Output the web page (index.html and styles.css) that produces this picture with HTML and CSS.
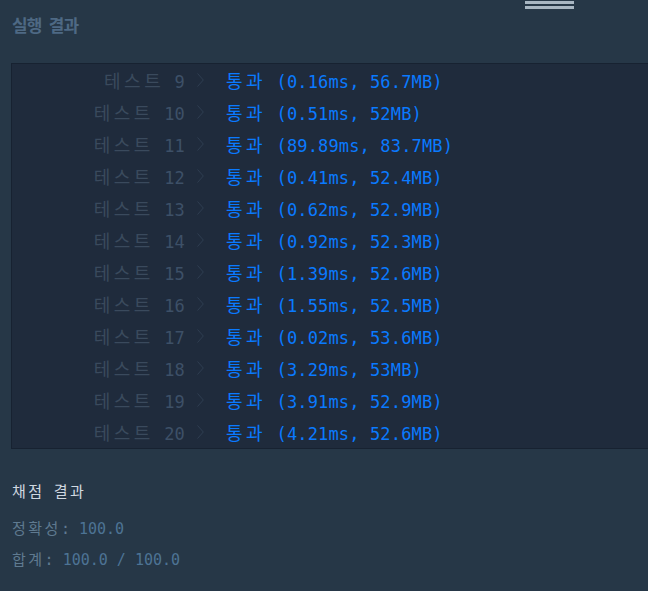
FILE: index.html
```html
<!DOCTYPE html>
<html lang="ko">
<head>
<meta charset="utf-8">
<title>실행 결과</title>
<link rel="stylesheet" href="styles.css">
</head>
<body>
<div class="page">
  <div class="header">
    <h2 class="title">실행 결과</h2>
    <div class="handle"><span></span><span></span></div>
  </div>
  <div class="console">
    <div class="row"><div class="name"><span class="ko">테스트</span> <span class="num">9</span></div><svg class="chev" width="7" height="14" viewBox="0 0 7 14"><path d="M0.5 0.5 L6.3 7 L0.5 13.5" fill="none" stroke="#2f3e51" stroke-width="1"/></svg><div class="res"><span class="ko">통과</span> (0.16ms, 56.7MB)</div></div>
    <div class="row"><div class="name"><span class="ko">테스트</span> <span class="num">10</span></div><svg class="chev" width="7" height="14" viewBox="0 0 7 14"><path d="M0.5 0.5 L6.3 7 L0.5 13.5" fill="none" stroke="#2f3e51" stroke-width="1"/></svg><div class="res"><span class="ko">통과</span> (0.51ms, 52MB)</div></div>
    <div class="row"><div class="name"><span class="ko">테스트</span> <span class="num">11</span></div><svg class="chev" width="7" height="14" viewBox="0 0 7 14"><path d="M0.5 0.5 L6.3 7 L0.5 13.5" fill="none" stroke="#2f3e51" stroke-width="1"/></svg><div class="res"><span class="ko">통과</span> (89.89ms, 83.7MB)</div></div>
    <div class="row"><div class="name"><span class="ko">테스트</span> <span class="num">12</span></div><svg class="chev" width="7" height="14" viewBox="0 0 7 14"><path d="M0.5 0.5 L6.3 7 L0.5 13.5" fill="none" stroke="#2f3e51" stroke-width="1"/></svg><div class="res"><span class="ko">통과</span> (0.41ms, 52.4MB)</div></div>
    <div class="row"><div class="name"><span class="ko">테스트</span> <span class="num">13</span></div><svg class="chev" width="7" height="14" viewBox="0 0 7 14"><path d="M0.5 0.5 L6.3 7 L0.5 13.5" fill="none" stroke="#2f3e51" stroke-width="1"/></svg><div class="res"><span class="ko">통과</span> (0.62ms, 52.9MB)</div></div>
    <div class="row"><div class="name"><span class="ko">테스트</span> <span class="num">14</span></div><svg class="chev" width="7" height="14" viewBox="0 0 7 14"><path d="M0.5 0.5 L6.3 7 L0.5 13.5" fill="none" stroke="#2f3e51" stroke-width="1"/></svg><div class="res"><span class="ko">통과</span> (0.92ms, 52.3MB)</div></div>
    <div class="row"><div class="name"><span class="ko">테스트</span> <span class="num">15</span></div><svg class="chev" width="7" height="14" viewBox="0 0 7 14"><path d="M0.5 0.5 L6.3 7 L0.5 13.5" fill="none" stroke="#2f3e51" stroke-width="1"/></svg><div class="res"><span class="ko">통과</span> (1.39ms, 52.6MB)</div></div>
    <div class="row"><div class="name"><span class="ko">테스트</span> <span class="num">16</span></div><svg class="chev" width="7" height="14" viewBox="0 0 7 14"><path d="M0.5 0.5 L6.3 7 L0.5 13.5" fill="none" stroke="#2f3e51" stroke-width="1"/></svg><div class="res"><span class="ko">통과</span> (1.55ms, 52.5MB)</div></div>
    <div class="row"><div class="name"><span class="ko">테스트</span> <span class="num">17</span></div><svg class="chev" width="7" height="14" viewBox="0 0 7 14"><path d="M0.5 0.5 L6.3 7 L0.5 13.5" fill="none" stroke="#2f3e51" stroke-width="1"/></svg><div class="res"><span class="ko">통과</span> (0.02ms, 53.6MB)</div></div>
    <div class="row"><div class="name"><span class="ko">테스트</span> <span class="num">18</span></div><svg class="chev" width="7" height="14" viewBox="0 0 7 14"><path d="M0.5 0.5 L6.3 7 L0.5 13.5" fill="none" stroke="#2f3e51" stroke-width="1"/></svg><div class="res"><span class="ko">통과</span> (3.29ms, 53MB)</div></div>
    <div class="row"><div class="name"><span class="ko">테스트</span> <span class="num">19</span></div><svg class="chev" width="7" height="14" viewBox="0 0 7 14"><path d="M0.5 0.5 L6.3 7 L0.5 13.5" fill="none" stroke="#2f3e51" stroke-width="1"/></svg><div class="res"><span class="ko">통과</span> (3.91ms, 52.9MB)</div></div>
    <div class="row"><div class="name"><span class="ko">테스트</span> <span class="num">20</span></div><svg class="chev" width="7" height="14" viewBox="0 0 7 14"><path d="M0.5 0.5 L6.3 7 L0.5 13.5" fill="none" stroke="#2f3e51" stroke-width="1"/></svg><div class="res"><span class="ko">통과</span> (4.21ms, 52.6MB)</div></div>
  </div>
  <div class="summary">
    <div class="sum-title"><span class="ko2">채점</span> <span class="ko2">결과</span></div>
    <div class="stat"><span class="ko2">정확성</span>: <span class="val">100.0</span></div>
    <div class="stat"><span class="ko2">합계</span>: <span class="val">100.0 / 100.0</span></div>
  </div>
</div>
</body>
</html>
```

FILE: styles.css
```css
html, body {
  margin: 0;
  padding: 0;
  background: #263747;
}
.page {
  width: 648px;
  height: 591px;
  overflow: hidden;
  position: relative;
  font-family: "DejaVu Sans Mono", "Noto Sans CJK KR", monospace;
}
.header {
  height: 63px;
  box-sizing: border-box;
  padding: 12px 0 0 12px;
}
.title {
  margin: 0;
  font-family: "Noto Sans CJK KR", "Noto Sans", sans-serif;
  font-size: 17px;
  letter-spacing: -0.8px;
  word-spacing: 3px;
  font-weight: 700;
  line-height: 25px;
  color: #4e6984;
}
.handle {
  position: absolute;
  left: 525px;
  top: 1px;
  width: 49px;
  display: flex;
  flex-direction: column;
  gap: 2px;
}
.handle span {
  display: block;
  height: 3px;
  background: #a8b6c2;
}
.console {
  margin-left: 11px;
  background: #1f2b3c;
  border-top: 1px solid #172231;
  border-left: 1px solid #172231;
  border-bottom: 1px solid #172231;
}
.row {
  display: flex;
  align-items: center;
  height: 32px;
  font-size: 17px;
  letter-spacing: 0.15px;
  white-space: pre;
}
.name {
  width: 173px;
  text-align: right;
  color: #3a4a5d;
}
.num {
  color: #3d5067;
}
.ko {
  font-family: "Noto Sans CJK KR", sans-serif;
  font-size: 18px;
  letter-spacing: 3.5px;
}
.chev {
  margin-left: 12px;
  flex: none;
}
.res {
  margin-left: 22px;
  color: #0a7aff;
}
.summary {
  padding: 30px 0 0 12px;
}
.sum-title {
  font-size: 15px;
  line-height: 24px;
  color: #d0d8e0;
  white-space: pre;
}
.ko2 {
  font-family: "Noto Sans CJK KR", sans-serif;
  font-size: 15px;
  letter-spacing: 2.5px;
}
.stat {
  margin-top: 0;
  font-size: 15px;
  line-height: 30px;
  color: #5f7a90;
  white-space: pre;
}
.sum-title + .stat {
  margin-top: 9px;
}
.val {
  color: #4d7394;
}
```
